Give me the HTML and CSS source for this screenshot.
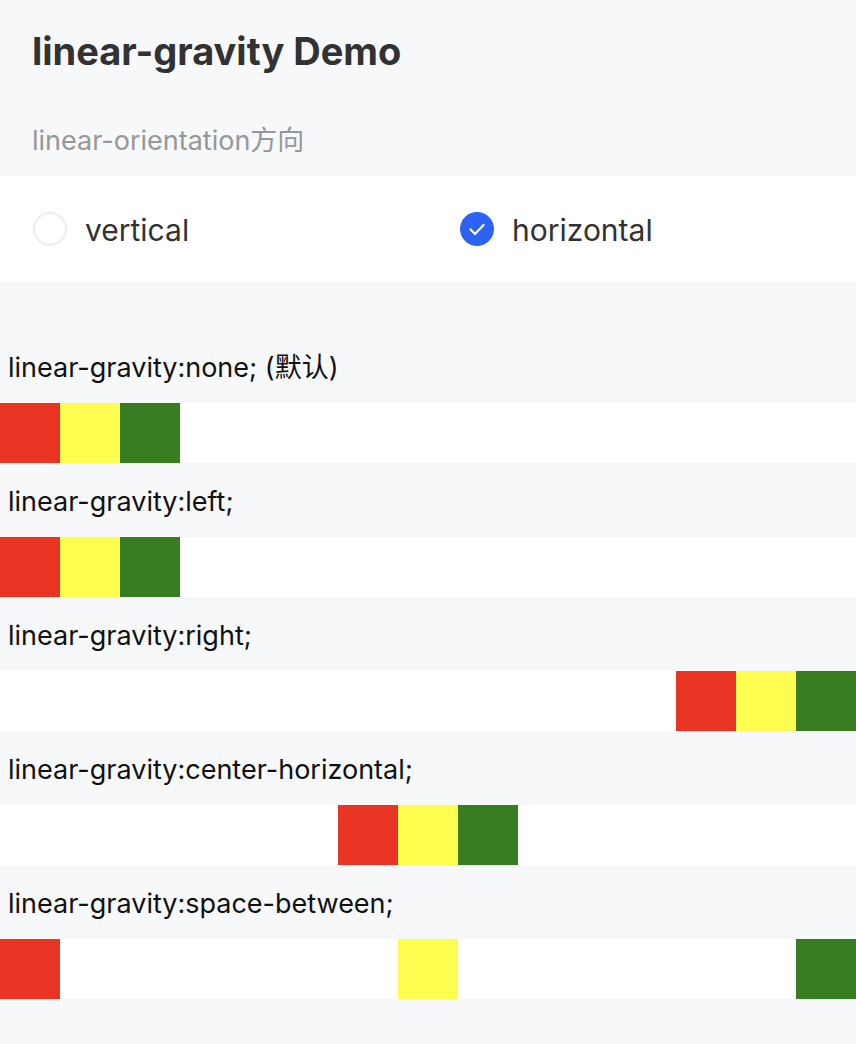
FILE: index.html
```html
<!DOCTYPE html>
<html lang="zh">
<head>
<meta charset="utf-8">
<title>linear-gravity Demo</title>
<link rel="stylesheet" href="styles.css">
</head>
<body>
<h1 class="title">linear-gravity Demo</h1>
<div class="subtitle">linear-orientation方向</div>
<div class="radio-panel">
  <div class="radio">
    <span class="radio-icon"></span>
    <span class="radio-label">vertical</span>
  </div>
  <div class="radio">
    <span class="radio-icon checked">
      <svg viewBox="0 0 34 34" width="34" height="34"><path d="M10.5 17.5 L15 22 L23.5 13" fill="none" stroke="#fff" stroke-width="2.2" stroke-linecap="round" stroke-linejoin="round"/></svg>
    </span>
    <span class="radio-label">horizontal</span>
  </div>
</div>
<div class="demos">
  <div class="label">linear-gravity:none; (默认)</div>
  <div class="row start"><i class="box red"></i><i class="box yellow"></i><i class="box green"></i></div>
  <div class="label">linear-gravity:left;</div>
  <div class="row start"><i class="box red"></i><i class="box yellow"></i><i class="box green"></i></div>
  <div class="label">linear-gravity:right;</div>
  <div class="row end"><i class="box red"></i><i class="box yellow"></i><i class="box green"></i></div>
  <div class="label">linear-gravity:center-horizontal;</div>
  <div class="row center"><i class="box red"></i><i class="box yellow"></i><i class="box green"></i></div>
  <div class="label">linear-gravity:space-between;</div>
  <div class="row between"><i class="box red"></i><i class="box yellow"></i><i class="box green"></i></div>
</div>
</body>
</html>
```
FILE: styles.css
```css
html, body {
  margin: 0;
  padding: 0;
  background: #f7f8fa;
  font-family: Inter, "Noto Sans CJK SC", sans-serif;
}
.title {
  margin: 0;
  padding: 27px 32px 0;
  height: 48px;
  font-size: 38px;
  line-height: 48px;
  font-weight: 700;
  color: #323233;
}
.subtitle {
  padding: 0 32px;
  height: 101px;
  line-height: 132px;
  box-sizing: border-box;
  font-size: 27px;
  color: #969799;
}
.radio-panel {
  background: #fff;
  height: 105px;
  padding-left: 33px;
  display: grid;
  grid-template-columns: 427px 1fr;
  align-items: center;
}
.radio {
  display: flex;
  align-items: center;
  gap: 18px;
}
.radio-icon {
  width: 34px;
  height: 34px;
  border-radius: 50%;
  box-sizing: border-box;
  border: 2px solid #ebedf0;
  display: block;
}
.radio-icon.checked {
  border: none;
  background: #2c63f5;
}
.radio-icon svg { display: block; }
.radio-label {
  font-size: 30px;
  color: #323233;
  line-height: 40px;
  padding-top: 2px;
}
.demos {
  padding-top: 48px;
  padding-bottom: 45px;
}
.label {
  box-sizing: border-box;
  height: 74px;
  padding-top: 4px;
  line-height: 70px;
  padding-left: 8px;
  font-size: 27px;
  color: #111;
}
.row {
  background: #fff;
  height: 60px;
  display: flex;
}
.row.start { justify-content: flex-start; }
.row.end { justify-content: flex-end; }
.row.center { justify-content: center; }
.row.between { justify-content: space-between; }
.box {
  display: block;
  width: 60px;
  height: 60px;
}
.red { background: #e93323; }
.yellow { background: #fefd50; }
.green { background: #387d22; }
```
